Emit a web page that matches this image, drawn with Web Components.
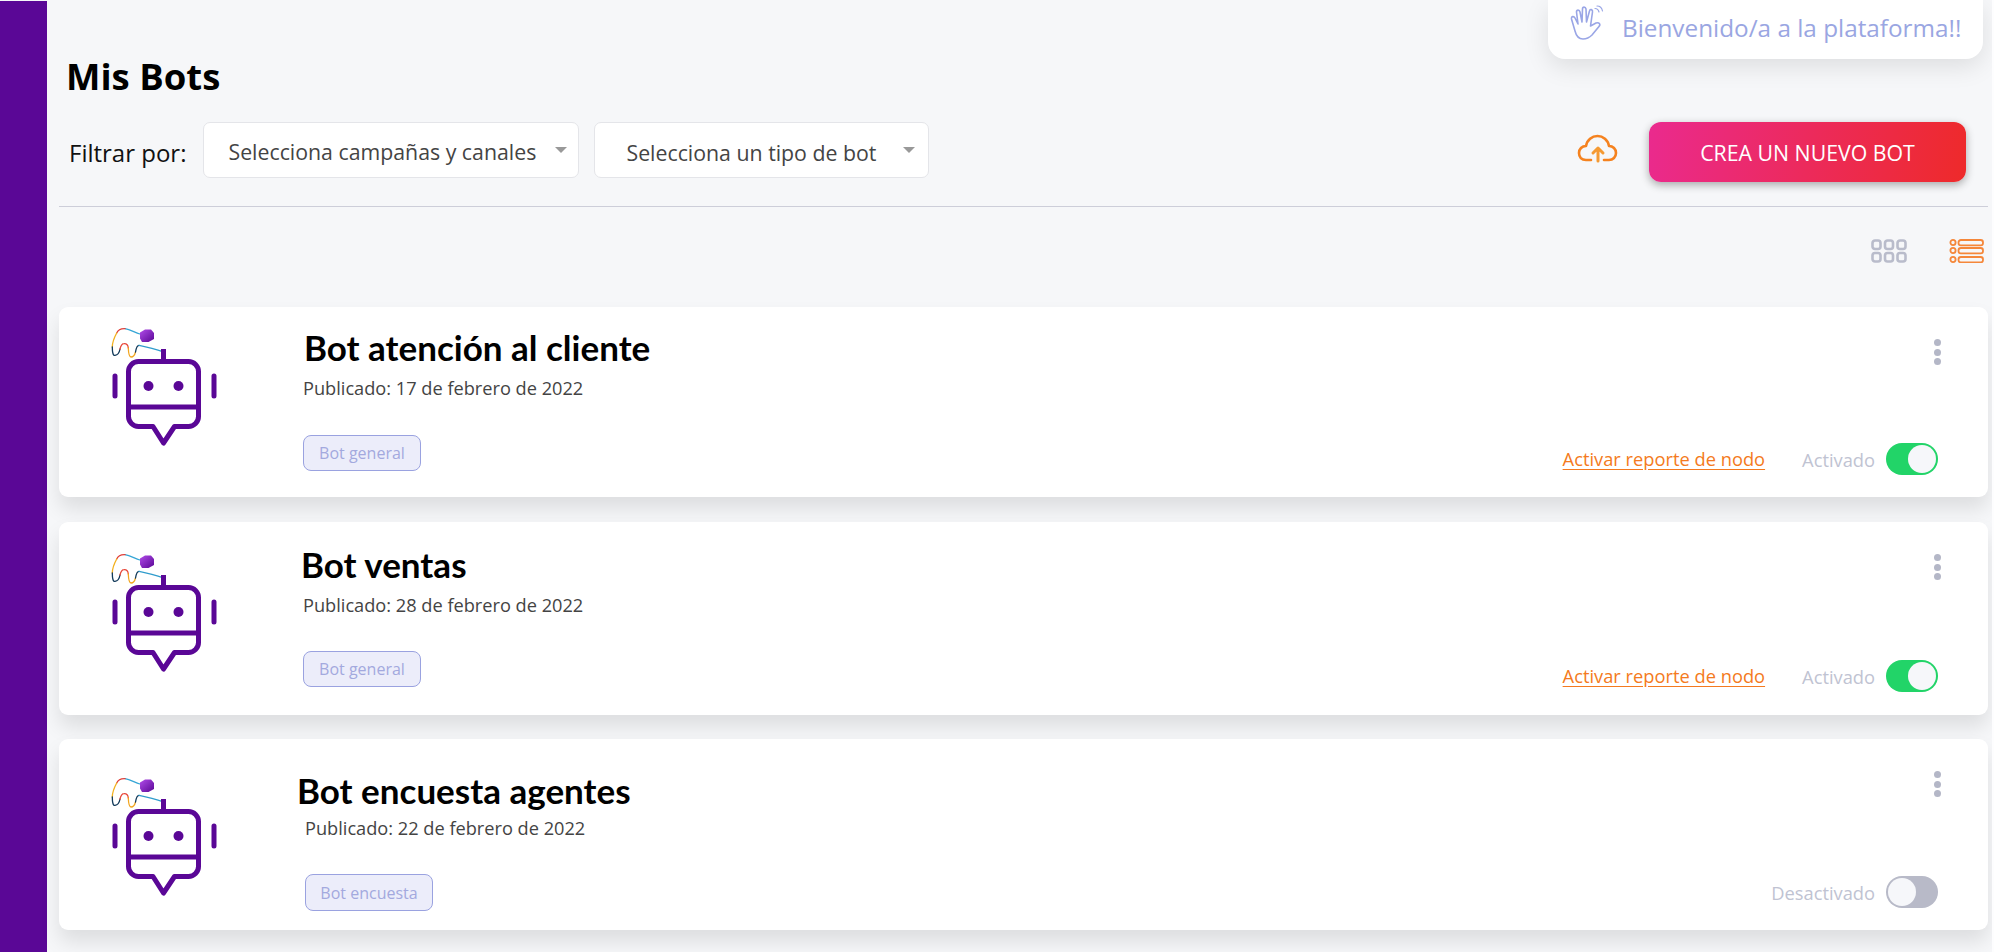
<!DOCTYPE html>
<html lang="es">
<head>
<meta charset="utf-8">
<title>Mis Bots</title>
<style>
  html, body { margin: 0; height: 952px; overflow: hidden; background: #f6f7f9; }
  body { font-family: "Open Sans", sans-serif; }
  b { font-weight: 500; }
</style>
</head>
<body>
<bots-page>
  <bots-header>
    <filter-select style="--w:376px;--pad:24px;--arrow-gap:19px;--text-shift:1px">Selecciona campañas y canales</filter-select>
    <filter-select style="--w:335px;--pad:31px;--arrow-gap:27px;--text-shift:2px">Selecciona un tipo de bot</filter-select>
  </bots-header>
  <view-switch></view-switch>
  <bot-card style="--h:190px;--icon-top:18px;--top:20px;--date-gap:9px;--badge-gap:35px;--name-x:1px;--col-x:0px;--badge-w:118px;--badge-h:36px;--foot:22px;margin-bottom:25px" report active>
    <span slot="name">Bot atención al cliente</span>
    <span slot="date"><b>Publicado:</b> 17 de febrero de 2022</span>
    Bot general
  </bot-card>
  <bot-card style="--h:193px;--icon-top:29px;--top:22px;--date-gap:9px;--badge-gap:34px;--name-x:-2px;--col-x:0px;--badge-w:118px;--badge-h:36px;--foot:23px;margin-bottom:24px" report active>
    <span slot="name">Bot ventas</span>
    <span slot="date"><b>Publicado:</b> 28 de febrero de 2022</span>
    Bot general
  </bot-card>
  <bot-card style="--h:191px;--icon-top:36px;--top:31px;--date-gap:6px;--badge-gap:34px;--name-x:-8px;--col-x:2px;--badge-w:128px;--badge-h:37px;--foot:22px">
    <span slot="name">Bot encuesta agentes</span>
    <span slot="date">Publicado: 22 de febrero de 2022</span>
    Bot encuesta
  </bot-card>
  <welcome-toast>Bienvenido/a a la plataforma!!</welcome-toast>
</bots-page>

<script>
class BotsPage extends HTMLElement {
  constructor() {
    super();
    this.attachShadow({ mode: 'open' });
    this.shadowRoot.innerHTML = `
      <style>
        :host { display: flex; position: relative; height: 952px; overflow: hidden; }
        .side { width: 47px; flex: none; background: #5a0796; margin-top: 1px; }
        main { flex: 1; min-width: 0; padding: 0 6px 0 12px; }
        .edge { position: absolute; top: 0; right: 0; bottom: 0; width: 2px; background: #fdfdfe; }
      </style>
      <div class="side"></div>
      <main><slot></slot></main>
      <div class="edge"></div>
    `;
  }
}
customElements.define('bots-page', BotsPage);

class BotsHeader extends HTMLElement {
  constructor() {
    super();
    this.attachShadow({ mode: 'open' });
    this.shadowRoot.innerHTML = `
      <style>
        :host { display: block; border-bottom: 1px solid #cdced9; padding: 56px 22px 28px 0; }
        h1 { margin: 0 0 26px 7px; font: 700 36.5px/40px "Open Sans", sans-serif; color: #000; }
        .row { display: flex; align-items: center; height: 56px; }
        .label { margin: 4px 17px 0 10px; font-size: 24px; color: #111; white-space: nowrap; }
        .filters { display: flex; gap: 15px; }
        .cloud { margin: -4px 0 0 auto; width: 42px; height: 30px; display: block; }
        button {
          margin: 4px 0 0 30px; width: 317px; height: 60px; border: 0; border-radius: 12px;
          background: linear-gradient(100deg, #ea2a8e, #ee2a2a); color: #fff;
          font: 400 21.3px "Open Sans", sans-serif; box-shadow: 0 3px 8px rgba(0,0,0,.32);
        }
      </style>
      <h1>Mis Bots</h1>
      <div class="row">
        <span class="label">Filtrar por:</span>
        <div class="filters"><slot></slot></div>
        <svg class="cloud" viewBox="0 0 42 30" fill="none" stroke="#f5821f" stroke-width="2.6" stroke-linecap="round" stroke-linejoin="round">
          <path d="M14 27H9C4.5 27 2 24 2 20C2 16 5 13 9 13C10 7 15 3 20.5 3C26 3 31 7 32 13C36 13 39 16 39 20C39 24 36 27 32 27H27"/>
          <path stroke="#f59a33" stroke-width="3" d="M21 28V15M16 20L21 15L26 20"/>
        </svg>
        <button>CREA UN NUEVO BOT</button>
      </div>
    `;
  }
}
customElements.define('bots-header', BotsHeader);

class FilterSelect extends HTMLElement {
  constructor() {
    super();
    this.attachShadow({ mode: 'open' });
    this.shadowRoot.innerHTML = `
      <style>
        :host {
          display: flex; align-items: center; box-sizing: border-box; width: var(--w); height: 56px;
          padding-left: var(--pad); background: #fff; border: 1px solid #e4e5e9; border-radius: 7px;
          font-size: 21.3px; color: #444; white-space: nowrap;
        }
        .text { position: relative; top: var(--text-shift); }
        .arrow {
          margin-left: var(--arrow-gap); width: 0; height: 0;
          border-left: 6px solid transparent; border-right: 6px solid transparent; border-top: 6px solid #999;
        }
      </style>
      <span class="text"><slot></slot></span><span class="arrow"></span>
    `;
  }
}
customElements.define('filter-select', FilterSelect);

class ViewSwitch extends HTMLElement {
  constructor() {
    super();
    this.attachShadow({ mode: 'open' });
    this.shadowRoot.innerHTML = `
      <style>
        :host { display: flex; justify-content: flex-end; align-items: center; gap: 41px; height: 100px; padding-right: 4px; box-sizing: border-box; padding-bottom: 13px; }
        svg { display: block; }
      </style>
      <svg width="37" height="24" viewBox="0 0 37 24" fill="none" stroke="#b9bccb" stroke-width="2.6">
        <rect x="1.5" y="1.5" width="8" height="8.5" rx="2.5"/><rect x="14" y="1.5" width="8" height="8.5" rx="2.5"/><rect x="26.5" y="1.5" width="8" height="8.5" rx="2.5"/>
        <rect x="1.5" y="14" width="8" height="8.5" rx="2.5"/><rect x="14" y="14" width="8" height="8.5" rx="2.5"/><rect x="26.5" y="14" width="8" height="8.5" rx="2.5"/>
      </svg>
      <svg width="35" height="24" viewBox="0 0 35 24" fill="none" stroke="#f5873a" stroke-width="1.8">
        <circle cx="4" cy="3.5" r="2.6"/><circle cx="4" cy="11.5" r="2.6"/><circle cx="4" cy="20.5" r="2.6"/>
        <rect x="9.5" y="1" width="24.5" height="5.4" rx="2.4"/><rect x="9.5" y="9" width="24.5" height="5.4" rx="2.4"/><rect x="9.5" y="18" width="24.5" height="5.4" rx="2.4"/>
      </svg>
    `;
  }
}
customElements.define('view-switch', ViewSwitch);

class BotIcon extends HTMLElement {
  constructor() {
    super();
    this.attachShadow({ mode: 'open' });
    this.shadowRoot.innerHTML = `
      <style>:host { display: block; width: 110px; height: 125px; } svg { display: block; }</style>
      <svg width="110" height="125" viewBox="0 0 110 125" fill="none" stroke-linecap="round" stroke-linejoin="round">
        <defs>
          <linearGradient id="mic" x1="0" y1="0" x2="1" y2="1"><stop offset="0" stop-color="#b04be8"/><stop offset="1" stop-color="#5a0796"/></linearGradient>
        </defs>
        <g stroke-width="1.3">
          <path stroke="#35a6d6" d="M30 9C24 7 20 4.5 15 3.7"/>
          <path stroke="#e0403a" d="M15 3.7C11 3.5 8 5 6.7 8"/>
          <path stroke="#f2b01e" d="M6.7 8C4 13 2.3 18 2.3 22"/>
          <path stroke="#123a5a" d="M2.3 22C2.3 27 3 31 5 30.3C8 30 9.5 27 10 24"/>
          <path stroke="#e8483a" d="M10 24C11 20 12 18.7 14 18.7C17 18.5 18 20 18.3 23"/>
          <path stroke="#f2a51e" d="M18.3 23C18.5 28 19 32 21 32C24 32 25 29 25.5 27"/>
          <path stroke="#123a5a" d="M25.5 27C26 24 27 20.3 29 20.3"/>
          <path stroke="#2f9ccc" d="M29 20.3C36 21.5 44 24 52 26.3"/>
        </g>
        <path d="M30 7.5L35 4.5H41L44 8V14L38.5 17H32L30 13.5Z" fill="url(#mic)"/>
        <g stroke="#5a0796" stroke-width="5">
          <path stroke-linecap="butt" d="M53.5 24V36"/>
          <path d="M28.5 36.5H78.5C84 36.5 88.5 41 88.5 46.5V91.5C88.5 97 84 101.5 78.5 101.5H64.5L53.5 118L43 101.5H28.5C23 101.5 18.5 97 18.5 91.5V46.5C18.5 41 23 36.5 28.5 36.5Z"/>
          <path stroke-linecap="butt" d="M18.5 82H88.5"/>
          <path d="M5 51V71M104 51V71"/>
        </g>
        <circle cx="38.5" cy="61" r="5" fill="#5a0796"/><circle cx="68.5" cy="61" r="5" fill="#5a0796"/>
      </svg>
    `;
  }
}
customElements.define('bot-icon', BotIcon);

class ToggleSwitch extends HTMLElement {
  constructor() {
    super();
    this.attachShadow({ mode: 'open' });
    this.shadowRoot.innerHTML = `
      <style>
        :host { display: flex; width: 52px; height: 32px; box-sizing: border-box; padding: 2px; border-radius: 16px; background: #b8bac8; }
        :host([on]) { background: #22d468; justify-content: flex-end; }
        i { display: block; width: 28px; height: 28px; border-radius: 50%; background: #f6f7fa; }
      </style>
      <i></i>
    `;
  }
}
customElements.define('toggle-switch', ToggleSwitch);

class BotCard extends HTMLElement {
  constructor() {
    super();
    this.attachShadow({ mode: 'open' });
    const active = this.hasAttribute('active');
    const report = this.hasAttribute('report');
    this.shadowRoot.innerHTML = `
      <style>
        :host {
          display: flex; box-sizing: border-box; height: var(--h); background: #fff; border-radius: 9px;
          box-shadow: 0 12px 20px rgba(0,0,0,.1);
        }
        .pic { flex: none; box-sizing: border-box; width: 244px; padding: var(--icon-top) 0 0 51px; }
        .info { flex: 1; padding-top: var(--top); margin-left: var(--col-x); }
        .name { margin-left: var(--name-x); font: 700 35px/40px Lato, sans-serif; color: #000; white-space: nowrap; }
        .date { margin-top: var(--date-gap); font-size: 18.2px; line-height: 24px; color: #444; }
        .badge {
          display: flex; align-items: center; justify-content: center; box-sizing: border-box;
          margin-top: var(--badge-gap); width: var(--badge-w); height: var(--badge-h);
          background: #ecedfa; border: 1px solid #9aa2e0; border-radius: 8px; font-size: 16px; color: #a3a9de;
        }
        .right { display: flex; flex-direction: column; align-items: flex-end; justify-content: space-between; padding: 32px 50px var(--foot) 0; }
        .dots { display: flex; flex-direction: column; gap: 2.5px; margin-right: -3px; }
        .dots i { display: block; width: 7px; height: 7px; border-radius: 50%; background: #b4b7c7; }
        .foot { display: flex; align-items: center; font-size: 18.3px; }
        a { margin: 0 37px 2px 0; color: #f47a20; text-decoration: underline; text-underline-offset: 3px; }
        .state { margin-right: 11px; color: #c0c3d2; }
      </style>
      <div class="pic"><bot-icon></bot-icon></div>
      <div class="info">
        <div class="name"><slot name="name"></slot></div>
        <div class="date"><slot name="date"></slot></div>
        <div class="badge"><slot></slot></div>
      </div>
      <div class="right">
        <div class="dots"><i></i><i></i><i></i></div>
        <div class="foot">
          ${report ? '<a>Activar reporte de nodo</a>' : ''}
          <span class="state">${active ? 'Activado' : 'Desactivado'}</span>
          <toggle-switch ${active ? 'on' : ''}></toggle-switch>
        </div>
      </div>
    `;
  }
}
customElements.define('bot-card', BotCard);

class WelcomeToast extends HTMLElement {
  constructor() {
    super();
    this.attachShadow({ mode: 'open' });
    this.shadowRoot.innerHTML = `
      <style>
        :host {
          position: absolute; top: 0; right: 11px; width: 435px; height: 59px; box-sizing: border-box;
          display: flex; align-items: flex-start; padding: 5px 0 0 22px; background: #fff;
          border-radius: 0 0 17px 17px; box-shadow: 0 8px 24px rgba(0,0,0,.1);
          font-size: 24.3px; color: #9aa6e2; white-space: nowrap;
        }
        svg { flex: none; display: block; margin-right: 18px; }
        span { line-height: 38px; margin-top: 4px; }
      </style>
      <svg width="34" height="36" viewBox="0 0 34 36" fill="none" stroke="#9aa6e6" stroke-width="1.6" stroke-linecap="round" stroke-linejoin="round">
        <path d="M13 34C8 34 6 30 5 26L1.5 14C1 11 4 11 5 13L8 19L6.5 7C6.5 4.5 9.5 4.5 10 7L12 17L12.5 4C12.5 1.5 15.5 1.5 16 4L16.5 17L19.5 6C20 3.5 23 4.5 22.5 7L20.5 21L26 18C29 17 31 19 29 21.5L22 30C19 33 16 34 13 34Z"/>
        <path stroke-width="1.2" d="M25 3.5C27 3.5 28.5 5 29 7M27 1C30 1 32 3.5 32.5 6"/>
      </svg>
      <span><slot></slot></span>
    `;
  }
}
customElements.define('welcome-toast', WelcomeToast);
</script>
</body>
</html>
